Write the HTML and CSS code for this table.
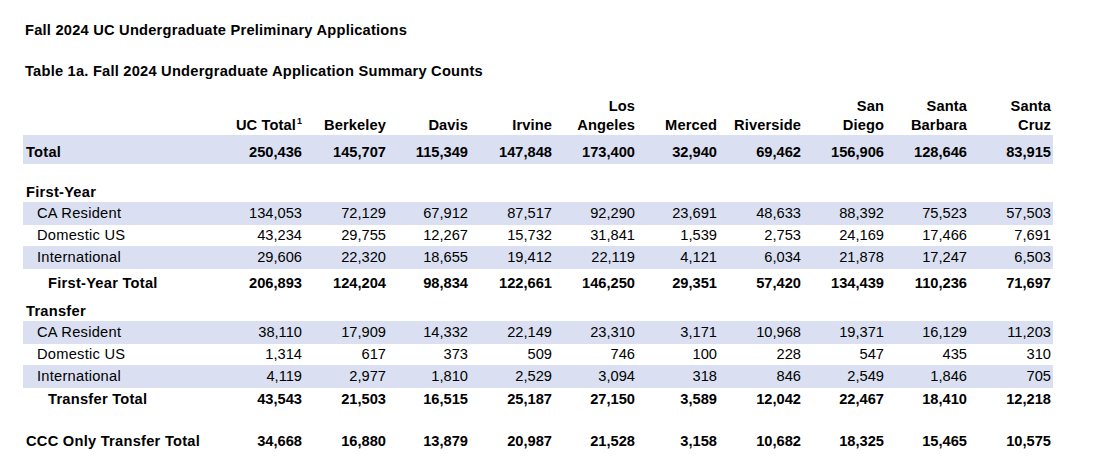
FILE: index.html
```html
<!DOCTYPE html>
<html>
<head>
<meta charset="utf-8">
<link rel="stylesheet" href="styles.css">
</head>
<body>
<div class="page">
  <div class="title">Fall 2024 UC Undergraduate Preliminary Applications</div>
  <div class="title subtitle">Table 1a. Fall 2024 Undergraduate Application Summary Counts</div>
  <table class="summary">
    <colgroup>
      <col class="c-label">
      <col class="c83"><col class="c84"><col class="c82"><col class="c84"><col class="c83">
      <col class="c82"><col class="c84"><col class="c83"><col class="c83"><col class="c84">
    </colgroup>
    <thead>
      <tr class="r-head">
        <th></th>
        <th>UC Total<span class="sup">1</span></th>
        <th>Berkeley</th>
        <th>Davis</th>
        <th>Irvine</th>
        <th>Los<br>Angeles</th>
        <th>Merced</th>
        <th>Riverside</th>
        <th>San<br>Diego</th>
        <th>Santa<br>Barbara</th>
        <th>Santa<br>Cruz</th>
      </tr>
    </thead>
    <tbody>
      <tr class="r-total band bold">
        <td class="lbl">Total</td>
        <td>250,436</td><td>145,707</td><td>115,349</td><td>147,848</td><td>173,400</td><td>32,940</td><td>69,462</td><td>156,906</td><td>128,646</td><td>83,915</td>
      </tr>
      <tr class="r-sect1 bold">
        <td class="lbl">First-Year</td>
        <td></td><td></td><td></td><td></td><td></td><td></td><td></td><td></td><td></td><td></td>
      </tr>
      <tr class="r-b band">
        <td class="lbl sub">CA Resident</td>
        <td>134,053</td><td>72,129</td><td>67,912</td><td>87,517</td><td>92,290</td><td>23,691</td><td>48,633</td><td>88,392</td><td>75,523</td><td>57,503</td>
      </tr>
      <tr class="r-w">
        <td class="lbl sub">Domestic US</td>
        <td>43,234</td><td>29,755</td><td>12,267</td><td>15,732</td><td>31,841</td><td>1,539</td><td>2,753</td><td>24,169</td><td>17,466</td><td>7,691</td>
      </tr>
      <tr class="r-b band">
        <td class="lbl sub">International</td>
        <td>29,606</td><td>22,320</td><td>18,655</td><td>19,412</td><td>22,119</td><td>4,121</td><td>6,034</td><td>21,878</td><td>17,247</td><td>6,503</td>
      </tr>
      <tr class="r-fytotal bold">
        <td class="lbl tot">First-Year Total</td>
        <td>206,893</td><td>124,204</td><td>98,834</td><td>122,661</td><td>146,250</td><td>29,351</td><td>57,420</td><td>134,439</td><td>110,236</td><td>71,697</td>
      </tr>
      <tr class="r-sect2 bold">
        <td class="lbl">Transfer</td>
        <td></td><td></td><td></td><td></td><td></td><td></td><td></td><td></td><td></td><td></td>
      </tr>
      <tr class="r-b band">
        <td class="lbl sub">CA Resident</td>
        <td>38,110</td><td>17,909</td><td>14,332</td><td>22,149</td><td>23,310</td><td>3,171</td><td>10,968</td><td>19,371</td><td>16,129</td><td>11,203</td>
      </tr>
      <tr class="r-w">
        <td class="lbl sub">Domestic US</td>
        <td>1,314</td><td>617</td><td>373</td><td>509</td><td>746</td><td>100</td><td>228</td><td>547</td><td>435</td><td>310</td>
      </tr>
      <tr class="r-b band">
        <td class="lbl sub">International</td>
        <td>4,119</td><td>2,977</td><td>1,810</td><td>2,529</td><td>3,094</td><td>318</td><td>846</td><td>2,549</td><td>1,846</td><td>705</td>
      </tr>
      <tr class="r-ttotal bold">
        <td class="lbl tot">Transfer Total</td>
        <td>43,543</td><td>21,503</td><td>16,515</td><td>25,187</td><td>27,150</td><td>3,589</td><td>12,042</td><td>22,467</td><td>18,410</td><td>12,218</td>
      </tr>
      <tr class="r-ccc bold">
        <td class="lbl">CCC Only Transfer Total</td>
        <td>34,668</td><td>16,880</td><td>13,879</td><td>20,987</td><td>21,528</td><td>3,158</td><td>10,682</td><td>18,325</td><td>15,465</td><td>10,575</td>
      </tr>
    </tbody>
  </table>
</div>
</body>
</html>
```

FILE: styles.css
```css
html, body {
  margin: 0;
  padding: 0;
  background: #ffffff;
}

body {
  font-family: "Liberation Sans", Arial, sans-serif;
  font-size: 14.67px;
  color: #000000;
}

.page {
  padding: 22px 0 0 23px;
}

.title {
  font-weight: bold;
  line-height: 17px;
  padding-left: 2px;
  letter-spacing: 0.22px;
}

.subtitle {
  margin-top: 24px;
}

.summary {
  margin-top: 17px;
  width: 1030px;
  table-layout: fixed;
  border-collapse: collapse;
  border-spacing: 0;
}

.c-label { width: 198px; }
.c82 { width: 82px; }
.c83 { width: 83px; }
.c84 { width: 84px; }

.summary th,
.summary td {
  padding: 0 2px 0 0;
  text-align: right;
  white-space: nowrap;
  vertical-align: top;
}

.summary th {
  font-weight: bold;
  line-height: 19px;
  vertical-align: bottom;
  letter-spacing: 0.1px;
}

.sup {
  font-size: 9px;
  line-height: 0;
  vertical-align: 6px;
  margin-left: 1px;
}

.summary td.lbl {
  text-align: left;
  padding-left: 3px;
  letter-spacing: 0.25px;
}

.summary td.sub {
  padding-left: 14px;
}

.summary td.tot {
  padding-left: 25px;
}

.bold td {
  font-weight: bold;
}

.band td {
  background: #dae0f1;
}

.r-total td {
  padding-top: 6px;
  line-height: 23px;
}

.r-sect1 td {
  padding-top: 19px;
  line-height: 19px;
}

.r-b td {
  line-height: 23px;
}

.r-w td {
  line-height: 21px;
}

.r-fytotal td {
  padding-top: 2px;
  line-height: 24px;
}

.r-sect2 td {
  padding-top: 6px;
  line-height: 20px;
}

.r-ttotal td {
  line-height: 22px;
}

.r-ccc td {
  padding-top: 20px;
  line-height: 22px;
}
```
